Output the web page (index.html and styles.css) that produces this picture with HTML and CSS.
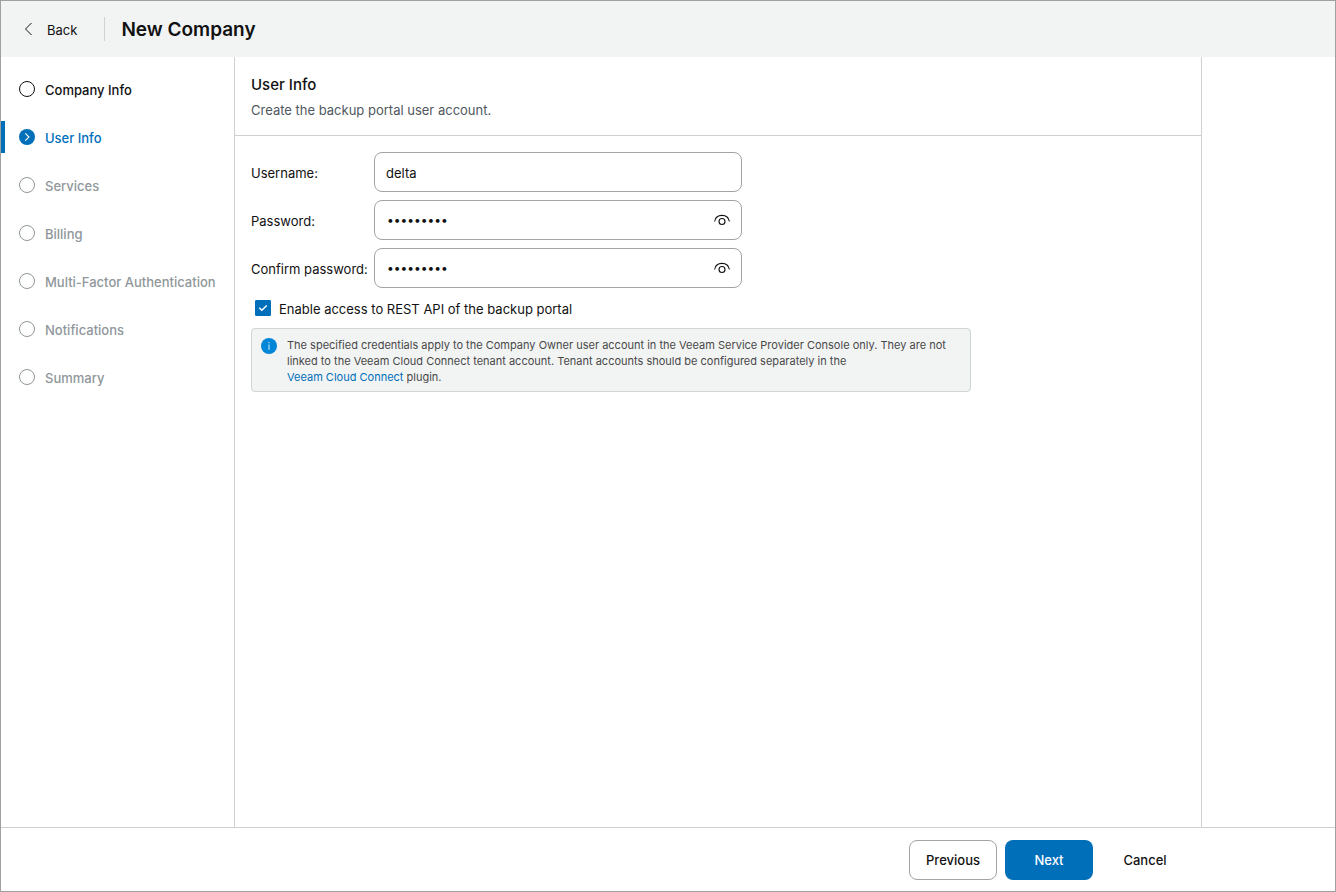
FILE: index.html
```html
<!DOCTYPE html>
<html lang="en">
<head>
<meta charset="utf-8">
<meta name="viewport" content="width=device-width, initial-scale=1">
<title>New Company</title>
<link rel="stylesheet" href="styles.css">
</head>
<body>
<div class="wizard">
  <header class="header">
    <button type="button" class="back">
      <svg width="16" height="16" viewBox="0 0 16 16" fill="none" stroke="currentColor" stroke-width="1" aria-hidden="true"><path d="M10.500 2 4.500 8l6 6"/></svg>
      <span class="back-text">Back</span>
    </button>
    <h1 class="title">New Company</h1>
  </header>

  <div class="body">
    <nav class="steps" aria-label="Wizard steps">
      <a href="#company" class="step step-done"><span class="dot"></span><span class="step-text">Company Info</span></a>
      <a href="#user" class="step step-active" aria-current="step">
        <svg width="16" height="16" viewBox="0 0 16 16" fill="none" aria-hidden="true"><circle cx="8" cy="8" r="8" fill="currentColor"/><path d="m6.300 4.300 3.700 3.700-3.700 3.700" stroke="#fff" stroke-width="1.100"/></svg>
        <span class="step-text">User Info</span>
      </a>
      <a href="#services" class="step"><span class="dot"></span><span class="step-text">Services</span></a>
      <a href="#billing" class="step"><span class="dot"></span><span class="step-text">Billing</span></a>
      <a href="#mfa" class="step"><span class="dot"></span><span class="step-text">Multi-Factor Authentication</span></a>
      <a href="#notifications" class="step"><span class="dot"></span><span class="step-text">Notifications</span></a>
      <a href="#summary" class="step"><span class="dot"></span><span class="step-text">Summary</span></a>
    </nav>

    <main class="content">
      <div class="intro">
        <h2 class="intro-title">User Info</h2>
        <p class="intro-text">Create the backup portal user account.</p>
      </div>
      <form class="form" id="user-form">
        <div class="fields">
          <label class="label" for="username">Username:</label>
          <div class="field"><input class="input" id="username" type="text" value="delta"></div>
          <label class="label" for="password">Password:</label>
          <div class="field">
            <input class="input input-secret" id="password" type="password" value="delta1234">
            <button type="button" class="reveal" aria-label="Show password">
              <svg width="16" height="16" viewBox="0 0 16 16" fill="none" stroke="currentColor" stroke-width="1.100" aria-hidden="true"><path d="M.6 9.500C1.200 5.700 4.200 3.400 8 3.400S14.800 5.700 15.400 9.500"/><circle cx="8" cy="9.500" r="3"/></svg>
            </button>
          </div>
          <label class="label" for="confirm">Confirm password:</label>
          <div class="field">
            <input class="input input-secret" id="confirm" type="password" value="delta1234">
            <button type="button" class="reveal" aria-label="Show password">
              <svg width="16" height="16" viewBox="0 0 16 16" fill="none" stroke="currentColor" stroke-width="1.100" aria-hidden="true"><path d="M.6 9.500C1.200 5.700 4.200 3.400 8 3.400S14.800 5.700 15.400 9.500"/><circle cx="8" cy="9.500" r="3"/></svg>
            </button>
          </div>
        </div>
        <div class="option">
          <span class="check">
            <input class="check-input" id="rest" type="checkbox" checked>
            <svg class="check-mark" width="16" height="16" viewBox="0 0 16 16" fill="none" stroke="#fff" stroke-width="1.500" aria-hidden="true"><path d="m4.300 7.800 2.500 2.500 5-4.800"/></svg>
          </span>
          <label class="label" for="rest">Enable access to REST API of the backup portal</label>
        </div>
        <div class="note">
          <svg class="note-icon" width="16" height="16" viewBox="0 0 16 16" aria-hidden="true"><circle cx="8" cy="8" r="8" fill="#0086d6"/><path d="M7.500 6.500h1V12h-1zM7.500 4h1v1.200h-1z" fill="#cfe8f8"/></svg>
          <p>The specified credentials apply to the Company Owner user account in the Veeam Service Provider Console only. They are not linked to the Veeam Cloud Connect tenant account. Tenant accounts should be configured separately in the <br><a class="link" href="#plugin">Veeam Cloud Connect</a> plugin.</p>
        </div>
      </form>
    </main>
  </div>

  <footer class="footer">
    <button type="button" class="button button-outline">Previous</button>
    <button type="submit" form="user-form" class="button button-primary">Next</button>
    <button type="button" class="button button-text">Cancel</button>
  </footer>
</div>
</body>
</html>
```

FILE: styles.css
```css
* { box-sizing: border-box; }

body {
  margin: 0;
  background: #fff;
  color: #111;
  font: 13px/20px Inter, "Liberation Sans", sans-serif;
}

h1, h2, p { margin: 0; }

button, input { font: inherit; color: inherit; }

button {
  padding: 0;
  border: 0;
  background: none;
  cursor: pointer;
}

svg { display: block; flex: none; }

.wizard {
  display: flex;
  flex-direction: column;
  min-height: 100vh;
  border: 1px solid #a0a0a0;
}

.header {
  display: flex;
  align-items: center;
  height: 56px;
  padding: 0 20px;
  background: #f2f4f4;
}

.back {
  display: flex;
  align-items: center;
  gap: 10px;
  height: 24px;
  padding-right: 27px;
  border-right: 1px solid #cfd2d3;
}

.back-text, .step-text, .label { padding-top: 2px; }

.title {
  padding: 2px 0 0 16px;
  font-size: 19px;
  line-height: 28px;
  font-weight: 600;
}

.body {
  display: flex;
  flex: 1;
}

.steps {
  display: flex;
  flex-direction: column;
  gap: 16px;
  flex: none;
  width: 234px;
  padding-top: 16px;
  border-right: 1px solid #cfd0d1;
}

.step {
  display: flex;
  align-items: center;
  gap: 10px;
  height: 32px;
  padding-left: 18px;
  color: #8f979b;
  font-weight: 500;
  text-decoration: none;
  white-space: nowrap;
}

.step-done { color: #111; }

.step-active {
  padding-left: 14px;
  border-left: 4px solid #006fba;
  border-radius: 0 3px 3px 0;
  color: #006fba;
}

.dot {
  flex: none;
  width: 16px;
  height: 16px;
  border: 1px solid currentColor;
  border-radius: 50%;
}

.content {
  flex: 1;
  min-width: 0;
  margin-right: 133px;
  border-right: 1px solid #cfd0d1;
}

.intro {
  padding: 16px 16px 13px;
  border-bottom: 1px solid #cfd0d1;
}

.intro-title {
  font-size: 15px;
  line-height: 24px;
  font-weight: 500;
}

.intro-text {
  padding-top: 1px;
  line-height: 24px;
  color: #505861;
}

.form { padding: 16px; }

.fields {
  display: grid;
  grid-template-columns: 115px minmax(0, 368px);
  column-gap: 8px;
  row-gap: 8px;
  align-items: center;
  white-space: nowrap;
}

.field { position: relative; }

.input {
  display: block;
  width: 100%;
  height: 40px;
  padding: 1px 11px 0;
  border: 1px solid #9fa4a8;
  border-radius: 8px;
  background: #fff;
}

.input-secret {
  padding: 0 40px 1px 12px;
  font-size: 12px;
}

.reveal {
  position: absolute;
  top: 12px;
  right: 12px;
}

.option {
  display: flex;
  align-items: center;
  gap: 8px;
  height: 40px;
  padding: 0 4px;
}

.check { position: relative; }

.check-input {
  appearance: none;
  display: block;
  width: 16px;
  height: 16px;
  margin: 0;
  border: 1px solid #006fba;
  border-radius: 1px;
}

.check-input:checked { background: #006fba; }

.check-mark {
  position: absolute;
  top: 0;
  left: 0;
  pointer-events: none;
}

.note {
  display: flex;
  gap: 10px;
  max-width: 720px;
  padding: 8px 9px 6px;
  border: 1px solid #d0d5d5;
  border-radius: 4px;
  background: #f2f4f4;
  color: #484848;
  font-size: 11px;
  line-height: 16px;
}

.note-icon { margin-top: 1px; }

.link {
  color: #006fba;
  text-decoration: none;
}

.footer {
  display: flex;
  justify-content: flex-end;
  gap: 8px;
  padding: 12px 146px 11px 16px;
  border-top: 1px solid #cfd0d1;
}

.button {
  width: 88px;
  height: 40px;
  border-radius: 8px;
  font-weight: 500;
}

.button-outline { border: 1px solid #9fa4a8; }

.button-primary {
  background: #006fba;
  color: #fff;
}
```
